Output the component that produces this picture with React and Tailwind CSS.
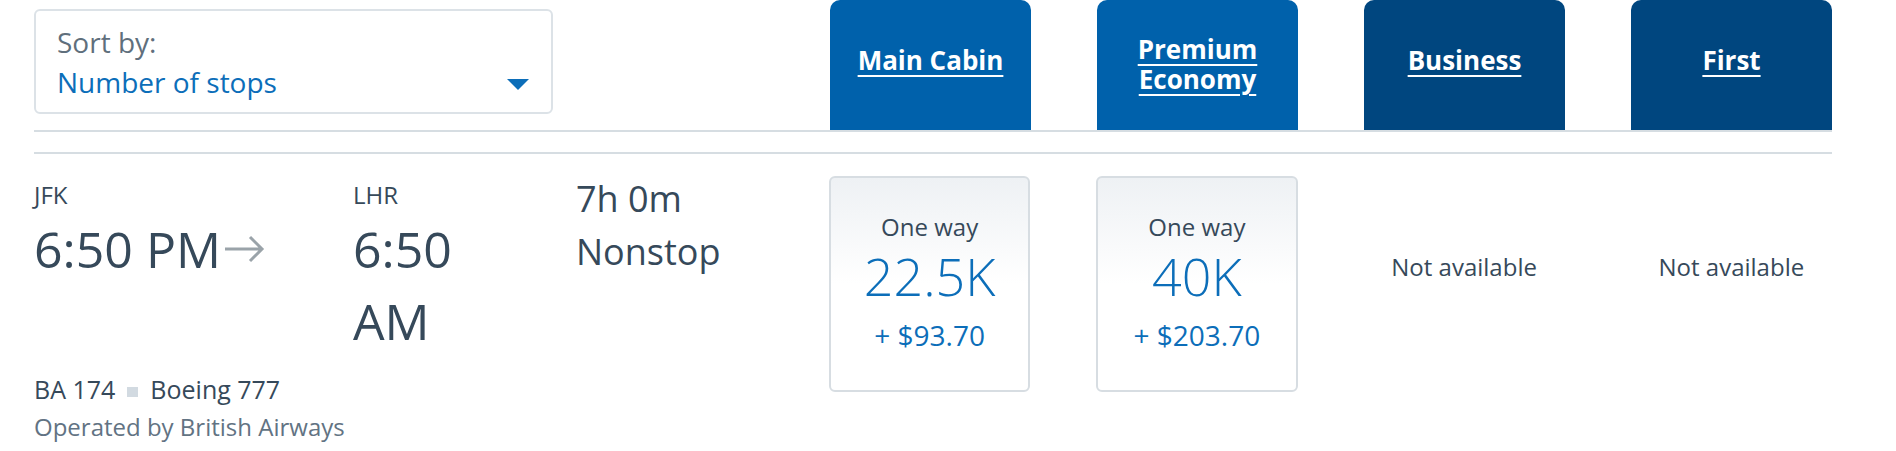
import React from 'react';

const cabins = [
  { name: 'Main Cabin', cls: 'bg-[#0061ab] pb-[10px]' },
  { name: 'Premium Economy', cls: 'bg-[#0061ab] pb-[2px]' },
  { name: 'Business', cls: 'bg-[#00467f] pb-[10px]' },
  { name: 'First', cls: 'bg-[#00467f] pb-[10px]' },
];

const fares = [
  { miles: '22.5K', cash: '+ $93.70' },
  { miles: '40K', cash: '+ $203.70' },
  null,
  null,
];

const ArrowRight = () => (
  <svg width="42" height="30" viewBox="0 0 42 30" className="ml-[3px] shrink-0">
    <path d="M1 15 H38 M26 3 L38 15 L26 27" fill="none" stroke="#9aa3a9" strokeWidth="3" />
  </svg>
);

const FareCard = ({ fare }) => (
  <div className="flex h-[216px] flex-col items-center rounded-[6px] border-2 border-[#d7dde2] bg-gradient-to-b from-[#eef1f4] via-white to-white pt-[31px]">
    <div className="text-[24px] leading-[36px] text-[#36495a]">One way</div>
    <div className="text-[52px] leading-[62px] font-light text-[#0c6eb9]">{fare.miles}</div>
    <div className="mt-[8px] text-[28px] leading-[40px] text-[#0c6eb9]">{fare.cash}</div>
  </div>
);

export default function App() {
  return (
    <div className="min-h-[451px] w-[1896px] bg-white font-['Open_Sans',sans-serif] text-[#36495a]">
      <div className="ml-[34px] w-[1798px]">
        {/* header: sort dropdown + cabin tabs */}
        <div className="flex items-start">
          <div className="mt-[9px] h-[105px] w-[519px] shrink-0 rounded-[6px] border-2 border-[#dce2e7] pl-[21px] pr-[21px] pt-[11px]">
            <div className="text-[28px] leading-[40px] text-[#5f6f7c]">Sort by:</div>
            <div className="flex items-center justify-between">
              <span className="text-[28px] leading-[40px] text-[#0c6eb9]">Number of stops</span>
              <svg width="22" height="11" viewBox="0 0 22 11" className="mr-[1px] mt-[4px]">
                <path d="M0 0 H22 L11 11 Z" fill="#0c6eb9" />
              </svg>
            </div>
          </div>
          <div className="ml-[277px] grid w-[1003px] grid-cols-4 gap-x-[66px]">
            {cabins.map((c) => (
              <div
                key={c.name}
                className={`flex h-[130px] items-center justify-center rounded-t-[10px] px-4 text-center ${c.cls}`}
              >
                <a
                  href="#"
                  className="text-[26px] leading-[30px] font-bold text-white underline decoration-2 underline-offset-[5px]"
                >
                  {c.name}
                </a>
              </div>
            ))}
          </div>
        </div>
        <div className="h-[2px] bg-[#d6dde2]" />
        <div className="mt-[20px] h-[2px] bg-[#d6dde2]" />

        {/* flight row */}
        <div className="flex items-start pt-[23px]">
          <div className="w-[795px] shrink-0">
            <div className="flex items-start">
              <div className="w-[319px] shrink-0">
                <div className="text-[24px] leading-[36px]">JFK</div>
                <div className="flex items-center">
                  <span className="text-[50px] leading-[72px]">6:50 PM</span>
                  <ArrowRight />
                </div>
              </div>
              <div className="w-[223px] shrink-0">
                <div className="text-[24px] leading-[36px]">LHR</div>
                <div className="w-[150px] text-[50px] leading-[72px]">6:50 AM</div>
              </div>
              <div className="-mt-[5px] text-[36px] leading-[53px]">
                <div>7h 0m</div>
                <div>Nonstop</div>
              </div>
            </div>
            <div className="mt-[14px] flex items-center text-[25px] leading-[36px]">
              <span>BA 174</span>
              <span className="mx-[12px] mt-[5px] h-[10px] w-[11px] bg-[#d2dae1]" />
              <span>Boeing 777</span>
            </div>
            <div className="mt-[3px] text-[24px] leading-[34px] text-[#627383]">Operated by British Airways</div>
          </div>
          <div className="-mt-[1px] grid w-[1003px] grid-cols-4 gap-x-[66px]">
            {fares.map((f, i) =>
              f ? (
                <FareCard key={i} fare={f} />
              ) : (
                <div key={i} className="pt-[73px] text-center text-[24px] leading-[36px] text-[#36495a]">
                  Not available
                </div>
              )
            )}
          </div>
        </div>
      </div>
    </div>
  );
}
